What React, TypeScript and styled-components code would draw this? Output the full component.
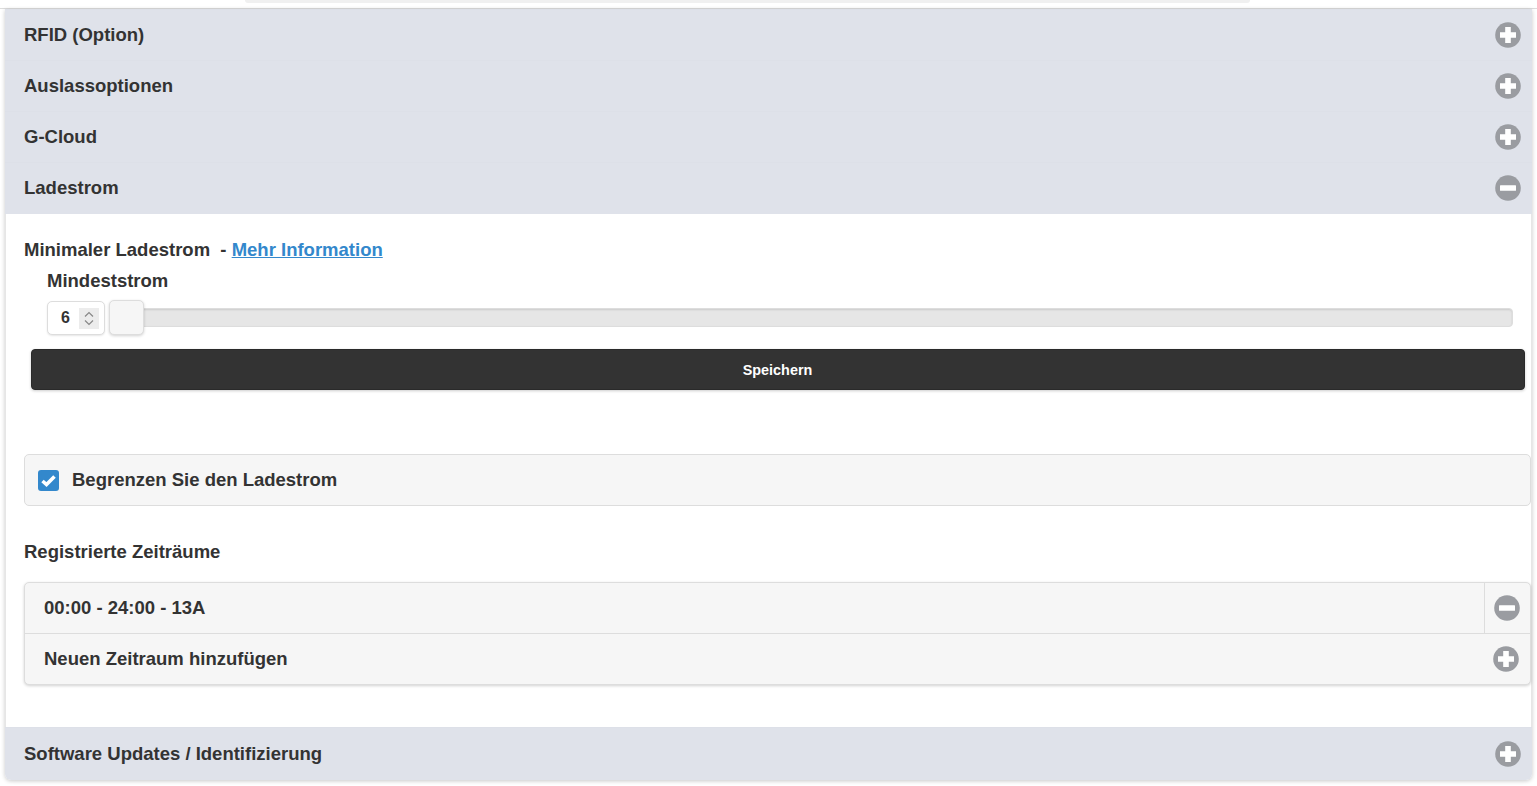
import { createGlobalStyle, styled } from "styled-components";

const GlobalStyle = createGlobalStyle`
  html, body {
    margin: 0;
    padding: 0;
    background: #fff;
    overflow: hidden;
  }
  body {
    font-family: "Liberation Sans", Arial, sans-serif;
    color: #333;
  }
`;

const Page = styled.div`
  width: 1537px;
  height: 786px;
  overflow: hidden;
`;

const TopBar = styled.div`
  height: 8px;
  border-bottom: 1px solid #dcdcdc;
  display: flex;
  justify-content: center;
  padding-right: 42px;
`;

const TopInput = styled.div`
  width: 1005px;
  height: 3px;
  background: #f0f0f0;
  border-radius: 0 0 4px 4px;
`;

const Accordion = styled.div`
  margin: 0 5.5px 0 5px;
  border-radius: 0 0 6px 6px;
  box-shadow: 0 1px 4px rgba(0, 0, 0, 0.22);
`;

const Header = styled.div<{ $last?: boolean; $open?: boolean }>`
  height: ${(p) => (p.$last ? "53px" : p.$open ? "52px" : "51px")};
  box-sizing: border-box;
  display: flex;
  align-items: center;
  justify-content: space-between;
  padding: ${(p) => (p.$open ? "0 11px 2px 19px" : "0 11px 0 19px")};
  background: #dfe2ea;
  border-top: 1px solid #dde0e8;
  font-size: 18.5px;
  font-weight: 700;
  border-radius: ${(p) => (p.$last ? "0 0 6px 6px" : "0")};
`;

const Body = styled.div`
  height: 513px;
  box-sizing: border-box;
  background: #fff;
  border-left: 1px solid #e6e6e6;
  border-right: 1px solid #e6e6e6;
  padding: 24px 0 0 18px;
`;

const Title = styled.div`
  font-size: 18.5px;
  font-weight: 700;
  line-height: 24px;
  white-space: pre;
`;

const InfoLink = styled.a`
  color: #3388cc;
  text-decoration: underline;
`;

const FieldLabel = styled.div`
  font-size: 18.5px;
  font-weight: 700;
  line-height: 24px;
  margin: 7px 0 0 23px;
`;

const SliderRow = styled.div`
  display: flex;
  align-items: center;
  margin: 7px 0 0 23px;
  height: 36px;
`;

const NumberBox = styled.div`
  width: 58px;
  height: 34px;
  box-sizing: border-box;
  display: flex;
  align-items: center;
  justify-content: space-between;
  padding: 0 5px 0 13px;
  background: #fff;
  border: 1px solid #ddd;
  border-radius: 5px;
  box-shadow: 0 1px 2px rgba(0, 0, 0, 0.1);
  font-size: 16px;
  font-weight: 700;
`;

const Spinner = styled.div`
  width: 20px;
  height: 21px;
  background: #ececec;
  display: flex;
  flex-direction: column;
  align-items: center;
  justify-content: center;
  gap: 1px;
  color: #888;
`;

const Track = styled.div`
  position: relative;
  flex: 1;
  height: 19px;
  margin: 0 18px 2px 4px;
  box-sizing: border-box;
  background: #e6e6e6;
  border: 1px solid #ddd;
  border-radius: 4px;
  box-shadow: inset 0 1px 2px rgba(0, 0, 0, 0.12);
`;

const Thumb = styled.div`
  position: absolute;
  left: -1px;
  top: -9px;
  width: 35px;
  height: 35px;
  box-sizing: border-box;
  background: #f6f6f6;
  border: 1px solid #ddd;
  border-radius: 5px;
  box-shadow: 0 1px 3px rgba(0, 0, 0, 0.18);
`;

const SaveButton = styled.button`
  display: block;
  width: 1494px;
  height: 41px;
  margin: 13px 0 0 6.5px;
  padding: 0;
  border: 1px solid #2a2a2a;
  border-radius: 4px;
  background: #333;
  color: #fff;
  font-family: inherit;
  font-size: 14.4px;
  font-weight: 700;
  box-shadow: 0 1px 3px rgba(0, 0, 0, 0.2);
`;

const CheckRow = styled.div`
  display: flex;
  align-items: center;
  gap: 13px;
  height: 52px;
  box-sizing: border-box;
  margin: 64px 0 0 0;
  padding-left: 13px;
  background: #f6f6f6;
  border: 1px solid #ddd;
  border-radius: 5px;
  font-size: 18.5px;
  font-weight: 700;
`;

const CheckBox = styled.span`
  width: 21px;
  height: 21px;
  border-radius: 3px;
  background: #3388cc;
  display: flex;
  align-items: center;
  justify-content: center;
`;

const SectionTitle = styled.div`
  font-size: 18.5px;
  font-weight: 700;
  line-height: 24px;
  margin-top: 34px;
`;

const List = styled.div`
  margin-top: 18px;
  background: #f6f6f6;
  border: 1px solid #ddd;
  border-radius: 5px;
  box-shadow: 0 1px 3px rgba(0, 0, 0, 0.18);
`;

const ListRow = styled.div<{ $divider?: boolean }>`
  height: ${(p) => (p.$divider ? "51px" : "50px")};
  box-sizing: border-box;
  display: flex;
  align-items: center;
  justify-content: space-between;
  border-top: ${(p) => (p.$divider ? "1px solid #ddd" : "none")};
  font-size: 18.5px;
  font-weight: 700;
`;

const RowText = styled.div`
  padding-left: 19px;
`;

const SplitButton = styled.div`
  width: 45px;
  height: 100%;
  border-left: 1px solid #ddd;
  display: flex;
  align-items: center;
  justify-content: center;
`;

const AddButton = styled.div`
  display: flex;
  padding-right: 11px;
`;

function CircleIcon({ minus }: { minus?: boolean }) {
  return (
    <svg width="26" height="26" viewBox="0 0 26 26" aria-hidden="true">
      <circle cx="13" cy="13" r="12.8" fill="#9a9ca1" />
      {minus ? (
        <rect x="5" y="10.2" width="16" height="5.6" rx="0.5" fill="#fff" />
      ) : (
        <path d="M10.2 5h5.6v5.2H21v5.6h-5.2V21h-5.6v-5.2H5v-5.6h5.2z" fill="#fff" />
      )}
    </svg>
  );
}

function Chevron({ up }: { up?: boolean }) {
  return (
    <svg width="10" height="7" viewBox="0 0 10 7" aria-hidden="true">
      <path
        d={up ? "M1 5.5L5 1.5L9 5.5" : "M1 1.5L5 5.5L9 1.5"}
        fill="none"
        stroke="currentColor"
        strokeWidth="1.2"
      />
    </svg>
  );
}

export default function App() {
  return (
    <Page>
      <GlobalStyle />
      <TopBar>
        <TopInput />
      </TopBar>
      <Accordion>
        <Header>
          RFID (Option)
          <CircleIcon />
        </Header>
        <Header>
          Auslassoptionen
          <CircleIcon />
        </Header>
        <Header>
          G-Cloud
          <CircleIcon />
        </Header>
        <Header $open>
          Ladestrom
          <CircleIcon minus />
        </Header>
        <Body>
          <Title>
            {"Minimaler Ladestrom  - "}
            <InfoLink href="#">Mehr Information</InfoLink>
          </Title>
          <FieldLabel>Mindeststrom</FieldLabel>
          <SliderRow>
            <NumberBox>
              6
              <Spinner>
                <Chevron up />
                <Chevron />
              </Spinner>
            </NumberBox>
            <Track>
              <Thumb />
            </Track>
          </SliderRow>
          <SaveButton>Speichern</SaveButton>
          <CheckRow>
            <CheckBox>
              <svg width="15" height="13" viewBox="0 0 15 13" aria-hidden="true">
                <path d="M1.5 7L5.5 10.5L13.5 2.5" fill="none" stroke="#fff" strokeWidth="3.6" />
              </svg>
            </CheckBox>
            Begrenzen Sie den Ladestrom
          </CheckRow>
          <SectionTitle>Registrierte Zeiträume</SectionTitle>
          <List>
            <ListRow>
              <RowText>00:00 - 24:00 - 13A</RowText>
              <SplitButton>
                <CircleIcon minus />
              </SplitButton>
            </ListRow>
            <ListRow $divider>
              <RowText>Neuen Zeitraum hinzufügen</RowText>
              <AddButton>
                <CircleIcon />
              </AddButton>
            </ListRow>
          </List>
        </Body>
        <Header $last>
          Software Updates / Identifizierung
          <CircleIcon />
        </Header>
      </Accordion>
    </Page>
  );
}
